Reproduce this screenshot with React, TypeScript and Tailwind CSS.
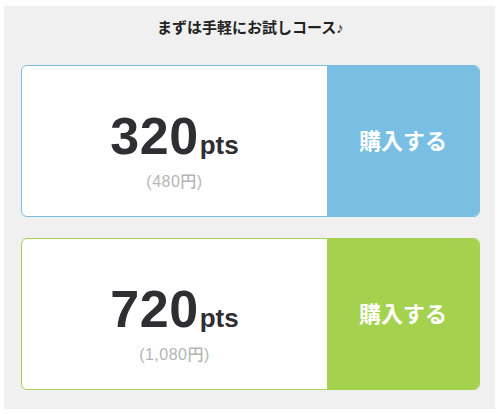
const FONT = "font-['Liberation_Sans','Noto_Sans_CJK_JP',sans-serif]";

type Plan = { pts: string; price: string; border: string; bg: string };

const plans: Plan[] = [
  { pts: "320", price: "(480円)", border: "border-[#7cbfdf]", bg: "bg-[#79bee3]" },
  { pts: "720", price: "(1,080円)", border: "border-[#a6d255]", bg: "bg-[#a4d24f]" },
];

function PlanCard({ plan }: { plan: Plan }) {
  return (
    <div className={`flex h-[152px] rounded-[6px] border-[1.5px] ${plan.border} bg-white overflow-hidden`}>
      <div className="flex flex-1 flex-col items-center pt-[44px]">
        <div className="flex items-baseline text-[#2e2e33]">
          <span className="text-[52px] font-bold leading-none tracking-[0.5px]">{plan.pts}</span>
          <span className="text-[26px] font-bold leading-none ml-[1px]">pts</span>
        </div>
        <p className="mt-[12px] text-[16px] font-medium text-[#b5b5b5] leading-none tracking-[0.5px]">
          {plan.price}
        </p>
      </div>
      <button className={`w-[152px] ${plan.bg} text-white text-[22px] font-bold flex items-center justify-center`}>
        購入する
      </button>
    </div>
  );
}

export default function App() {
  return (
    <div className={`w-[500px] h-[414px] bg-white pt-[6px] pl-[4px] pr-[5px] pb-[5px] ${FONT}`}>
      <div className="h-full bg-[#f0f0f0] pl-[17px] pr-[15px]">
        {/* Heading */}
        <h2 className="h-[59px] pt-[11px] text-center text-[15px] font-bold text-[#222]">
          まずは手軽にお試しコース♪
        </h2>
        <div className="flex flex-col gap-[21px]">
          {plans.map((p) => (
            <PlanCard key={p.pts} plan={p} />
          ))}
        </div>
      </div>
    </div>
  );
}
